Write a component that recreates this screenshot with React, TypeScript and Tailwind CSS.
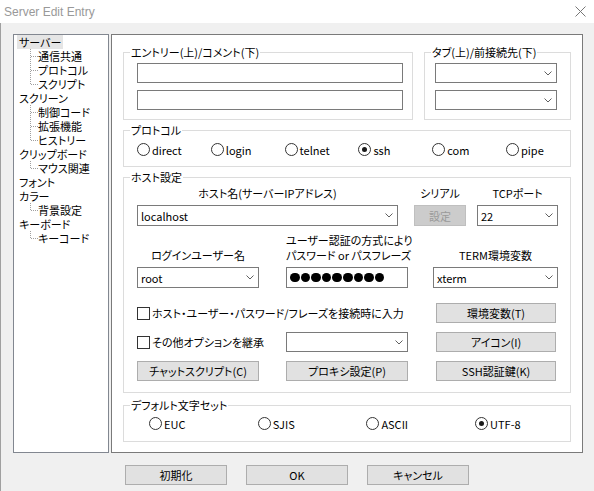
import React from "react"

const tree = [
  { label: "サーバー", children: ["通信共通", "プロトコル", "スクリプト"] },
  { label: "スクリーン", children: ["制御コード", "拡張機能", "ヒストリー"] },
  { label: "クリップボード", children: ["マウス関連"] },
  { label: "フォント", children: [] },
  { label: "カラー", children: ["背景設定"] },
  { label: "キーボード", children: ["キーコード"] },
]

const protocols = ["direct", "login", "telnet", "ssh", "com", "pipe"]
const charsets = ["EUC", "SJIS", "ASCII", "UTF-8"]

function Connector({ last }: { last: boolean }) {
  return (
    <svg width="8" height="14" className="shrink-0">
      <line x1="0.5" y1="0" x2="0.5" y2={last ? 7 : 14} stroke="#a0a0a0" strokeDasharray="1 1" />
      <line x1="1" y1="7.5" x2="8" y2="7.5" stroke="#a0a0a0" strokeDasharray="1 1" />
    </svg>
  )
}

function Chevron() {
  return (
    <svg width="8" height="5" className="shrink-0">
      <polyline points="0.5,0.5 4,4 7.5,0.5" fill="none" stroke="#606060" strokeWidth="1" />
    </svg>
  )
}

function Combo({ value, className }: { value?: string; className: string }) {
  return (
    <div className={`flex items-center bg-white border border-[#7a7a7a] pl-[3px] ${className}`}>
      <span className="flex-1">{value}</span>
      <span className="w-[17px] flex justify-center">
        <Chevron />
      </span>
    </div>
  )
}

function Btn({ label, className }: { label: string; className: string }) {
  return (
    <div className={`flex items-center justify-center bg-[#e1e1e1] border border-[#adadad] ${className}`}>
      {label}
    </div>
  )
}

function Radio({ label, checked }: { label: string; checked?: boolean }) {
  return (
    <div className="flex items-center h-[13px]">
      <span className="w-[13px] h-[13px] rounded-full border border-[#333] bg-white flex items-center justify-center shrink-0">
        {checked && <span className="w-[5px] h-[5px] rounded-full bg-[#1a1a1a]" />}
      </span>
      <span className="ml-[2px]">{label}</span>
    </div>
  )
}

function Check({ label }: { label: string }) {
  return (
    <div className="flex items-center">
      <span className="w-[13px] h-[13px] border border-[#333] bg-white shrink-0" />
      <span className="ml-[2px]">{label}</span>
    </div>
  )
}

function Group({ title, className, children }: { title: string; className: string; children?: React.ReactNode }) {
  return (
    <div className={`relative border border-[#dcdcdc] ${className}`}>
      <span className="absolute left-[6px] top-[-8px] bg-white px-[1px] leading-[14px]">{title}</span>
      {children}
    </div>
  )
}

export default function App() {
  return (
    <div className="w-[594px] h-[491px] bg-[#f0f0f0] flex flex-col text-[11px] leading-[14px] whitespace-nowrap text-black font-['Noto_Sans_CJK_JP',sans-serif] [font-feature-settings:'palt'] overflow-hidden">
      <div className="h-[23px] bg-white flex items-center justify-between pl-[4px] pr-[8px] shrink-0">
        <span className="text-[#999] font-['Liberation_Sans',sans-serif] text-[12px] [font-feature-settings:normal]">Server Edit Entry</span>
        <svg width="11" height="11">
          <line x1="0.5" y1="0.5" x2="10.5" y2="10.5" stroke="#777" />
          <line x1="10.5" y1="0.5" x2="0.5" y2="10.5" stroke="#777" />
        </svg>
      </div>

      <div className="flex-1 border-l border-[#a0a0a0] pl-[12px] pt-[11px]">
        <div className="flex h-[419px]">
          <aside className="w-[96px] bg-white border border-[#828790] flex flex-col">
            {tree.map((node, i) => (
              <React.Fragment key={node.label}>
                <div className="h-[14px] flex items-center">
                  <span className={`ml-[3px] px-[2px] h-[14px] ${i === 0 ? "bg-[#e5e5e5]" : ""}`}>{node.label}</span>
                </div>
                {node.children.map((c, j) => (
                  <div key={c} className="h-[14px] flex items-center pl-[16px]">
                    <Connector last={j === node.children.length - 1} />
                    <span>{c}</span>
                  </div>
                ))}
              </React.Fragment>
            ))}
          </aside>

          <main className="ml-[2px] w-[472px] bg-white border border-[#7a7a7a] px-[11px] pt-[17px] flex flex-col">
            <div className="flex gap-[11px]">
              <Group title="エントリー(上)/コメント(下)" className="w-[290px] h-[68px] pl-[13px] pt-[10px]">
                <div className="w-[266px] h-[20px] border border-[#7a7a7a] bg-white" />
                <div className="w-[266px] h-[20px] border border-[#7a7a7a] bg-white mt-[7px]" />
              </Group>
              <Group title="タブ(上)/前接続先(下)" className="w-[147px] h-[68px] pl-[10px] pt-[10px]">
                <Combo className="w-[122px] h-[20px]" />
                <Combo className="w-[122px] h-[20px] mt-[7px]" />
              </Group>
            </div>

            <Group title="プロトコル" className="mt-[10px] h-[37px] pl-[13px] pt-[12px]">
              <div className="grid grid-cols-[repeat(6,73.8px)]">
                {protocols.map((p) => (
                  <Radio key={p} label={p} checked={p === "ssh"} />
                ))}
              </div>
            </Group>

            <Group title="ホスト設定" className="mt-[10px] h-[216px] pl-[13px] pt-[8px]">
              <div className="flex h-[14px]">
                <span className="w-[261px] text-center">ホスト名(サーバーIPアドレス)</span>
                <span className="w-[52px] ml-[16px] text-center">シリアル</span>
                <span className="w-[81px] ml-[11px] text-center">TCPポート</span>
              </div>
              <div className="flex mt-[5px]">
                <Combo value="localhost" className="w-[261px] h-[21px]" />
                <div className="w-[52px] h-[21px] ml-[16px] bg-[#cccccc] border border-[#bfbfbf] text-[#9a9a9a] flex items-center justify-center">
                  設定
                </div>
                <Combo value="22" className="w-[81px] h-[21px] ml-[11px]" />
              </div>
              <div className="flex items-end mt-[7px] h-[30px] leading-[15px]">
                <span className="w-[122px] text-center">ログインユーザー名</span>
                <span className="w-[122px] ml-[27px] text-center">
                  ユーザー認証の方式により
                  <br />
                  パスワード or パスフレーズ
                </span>
                <span className="w-[125px] ml-[25px] text-center">TERM環境変数</span>
              </div>
              <div className="flex mt-[4px]">
                <Combo value="root" className="w-[122px] h-[21px]" />
                <div className="w-[122px] h-[21px] ml-[27px] border border-[#7a7a7a] bg-white flex items-center pl-[3px] gap-[1px]">
                  {Array.from({ length: 9 }).map((_, k) => (
                    <span key={k} className="w-[9.6px] h-[9.6px] rounded-full bg-black" />
                  ))}
                </div>
                <Combo value="xterm" className="w-[125px] h-[21px] ml-[25px]" />
              </div>
              <div className="flex items-center mt-[15px] h-[20px]">
                <div className="w-[299px]">
                  <Check label="ホスト・ユーザー・パスワード/フレーズを接続時に入力" />
                </div>
                <Btn label="環境変数(T)" className="w-[120px] h-[20px]" />
              </div>
              <div className="flex items-center mt-[9px] h-[20px]">
                <div className="w-[149px]">
                  <Check label="その他オプションを継承" />
                </div>
                <Combo className="w-[122px] h-[20px]" />
                <Btn label="アイコン(I)" className="w-[120px] h-[20px] ml-[28px]" />
              </div>
              <div className="flex items-center mt-[9px] h-[20px]">
                <Btn label="チャットスクリプト(C)" className="w-[122px] h-[20px]" />
                <Btn label="プロキシ設定(P)" className="w-[122px] h-[20px] ml-[27px]" />
                <Btn label="SSH認証鍵(K)" className="w-[120px] h-[20px] ml-[28px]" />
              </div>
            </Group>

            <Group title="デフォルト文字セット" className="mt-[12px] h-[37px] pl-[25px] pt-[11px]">
              <div className="grid grid-cols-[repeat(4,108.7px)]">
                {charsets.map((c) => (
                  <Radio key={c} label={c} checked={c === "UTF-8"} />
                ))}
              </div>
            </Group>
          </main>
        </div>

        <div className="flex gap-[19px] mt-[12px] ml-[112px]">
          <Btn label="初期化" className="w-[102px] h-[20px]" />
          <Btn label="OK" className="w-[102px] h-[20px]" />
          <Btn label="キャンセル" className="w-[102px] h-[20px]" />
        </div>
      </div>
    </div>
  )
}
